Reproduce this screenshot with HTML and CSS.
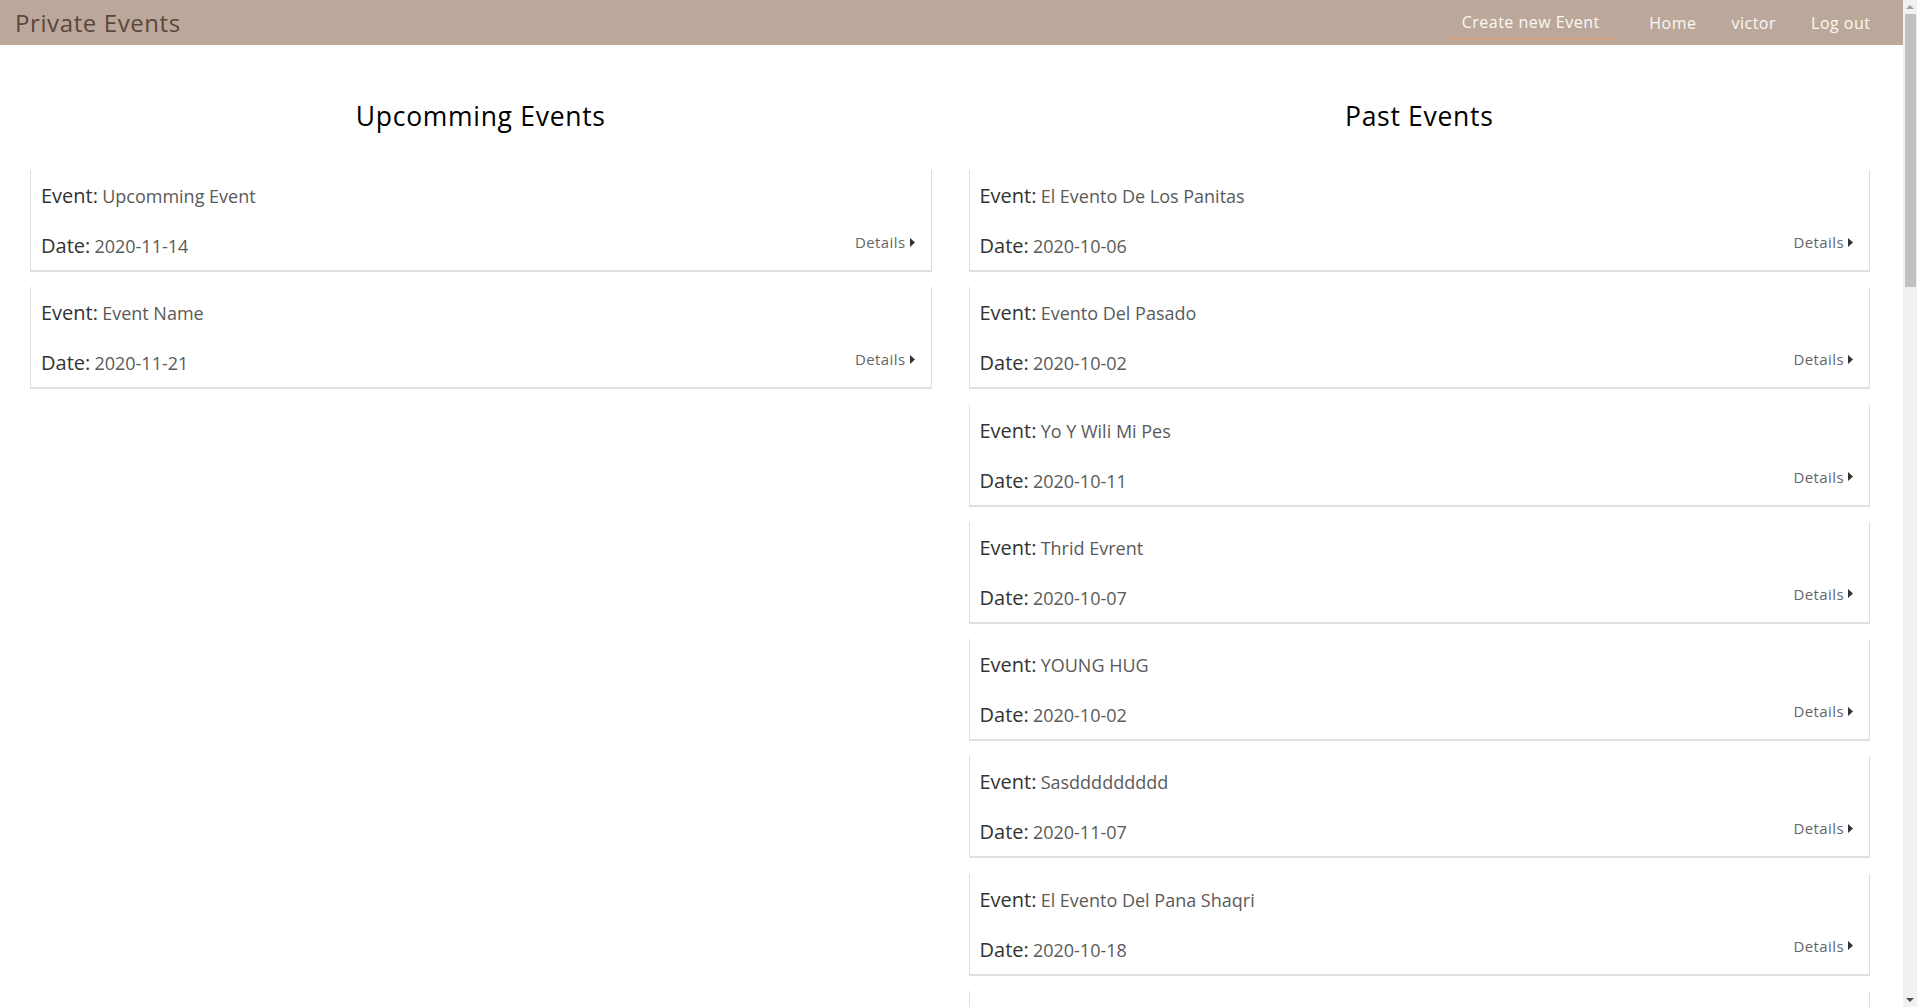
FILE: index.html
```html
<!DOCTYPE html>
<html lang="en">
<head>
<meta charset="utf-8">
<title>Private Events</title>
<link rel="stylesheet" href="styles.css">
</head>
<body>
<div class="page">
  <header class="topbar">
    <a class="brand" href="#">Private Events</a>
    <nav class="nav">
      <a class="nav-link active" href="#">Create new Event</a>
      <a class="nav-link" href="#">Home</a>
      <a class="nav-link" href="#">victor</a>
      <a class="nav-link" href="#">Log out</a>
    </nav>
  </header>
  <main class="columns">
    <section class="col">
      <h2 class="col-title">Upcomming Events</h2>
      <div class="card">
        <div class="line"><span class="label">Event:</span> <span class="value">Upcomming Event</span></div>
        <div class="line row"><span><span class="label">Date:</span> <span class="value">2020-11-14</span></span><a class="details" href="#">Details<svg class="caret" viewBox="0 0 5 9" width="5" height="9"><path d="M0 0L5 4.5L0 9Z"/></svg></a></div>
      </div>
      <div class="card">
        <div class="line"><span class="label">Event:</span> <span class="value">Event Name</span></div>
        <div class="line row"><span><span class="label">Date:</span> <span class="value">2020-11-21</span></span><a class="details" href="#">Details<svg class="caret" viewBox="0 0 5 9" width="5" height="9"><path d="M0 0L5 4.5L0 9Z"/></svg></a></div>
      </div>
    </section>
    <section class="col">
      <h2 class="col-title">Past Events</h2>
      <div class="card">
        <div class="line"><span class="label">Event:</span> <span class="value">El Evento De Los Panitas</span></div>
        <div class="line row"><span><span class="label">Date:</span> <span class="value">2020-10-06</span></span><a class="details" href="#">Details<svg class="caret" viewBox="0 0 5 9" width="5" height="9"><path d="M0 0L5 4.5L0 9Z"/></svg></a></div>
      </div>
      <div class="card">
        <div class="line"><span class="label">Event:</span> <span class="value">Evento Del Pasado</span></div>
        <div class="line row"><span><span class="label">Date:</span> <span class="value">2020-10-02</span></span><a class="details" href="#">Details<svg class="caret" viewBox="0 0 5 9" width="5" height="9"><path d="M0 0L5 4.5L0 9Z"/></svg></a></div>
      </div>
      <div class="card">
        <div class="line"><span class="label">Event:</span> <span class="value">Yo Y Wili Mi Pes</span></div>
        <div class="line row"><span><span class="label">Date:</span> <span class="value">2020-10-11</span></span><a class="details" href="#">Details<svg class="caret" viewBox="0 0 5 9" width="5" height="9"><path d="M0 0L5 4.5L0 9Z"/></svg></a></div>
      </div>
      <div class="card">
        <div class="line"><span class="label">Event:</span> <span class="value">Thrid Evrent</span></div>
        <div class="line row"><span><span class="label">Date:</span> <span class="value">2020-10-07</span></span><a class="details" href="#">Details<svg class="caret" viewBox="0 0 5 9" width="5" height="9"><path d="M0 0L5 4.5L0 9Z"/></svg></a></div>
      </div>
      <div class="card">
        <div class="line"><span class="label">Event:</span> <span class="value">YOUNG HUG</span></div>
        <div class="line row"><span><span class="label">Date:</span> <span class="value">2020-10-02</span></span><a class="details" href="#">Details<svg class="caret" viewBox="0 0 5 9" width="5" height="9"><path d="M0 0L5 4.5L0 9Z"/></svg></a></div>
      </div>
      <div class="card">
        <div class="line"><span class="label">Event:</span> <span class="value">Sasddddddddd</span></div>
        <div class="line row"><span><span class="label">Date:</span> <span class="value">2020-11-07</span></span><a class="details" href="#">Details<svg class="caret" viewBox="0 0 5 9" width="5" height="9"><path d="M0 0L5 4.5L0 9Z"/></svg></a></div>
      </div>
      <div class="card">
        <div class="line"><span class="label">Event:</span> <span class="value">El Evento Del Pana Shaqri</span></div>
        <div class="line row"><span><span class="label">Date:</span> <span class="value">2020-10-18</span></span><a class="details" href="#">Details<svg class="caret" viewBox="0 0 5 9" width="5" height="9"><path d="M0 0L5 4.5L0 9Z"/></svg></a></div>
      </div>
      <div class="card card-empty"></div>
    </section>
  </main>
</div>
<div class="scrollbar">
  <div class="sb-arrow sb-up"></div>
  <div class="sb-track"><div class="sb-thumb"></div></div>
  <div class="sb-arrow sb-down"></div>
</div>
</body>
</html>
```
FILE: styles.css
```css
html, body {
  margin: 0;
  padding: 0;
  background: #fff;
}
body {
  font-family: "Open Sans", "DejaVu Sans", sans-serif;
  color: #333;
  display: flex;
  height: 100vh;
  overflow: hidden;
}
a {
  text-decoration: none;
}
.page {
  flex: 1;
  min-width: 0;
  overflow: hidden;
}
.scrollbar {
  width: 14px;
  flex: none;
  height: 100vh;
  background: #f1f1f1;
  display: flex;
  flex-direction: column;
  align-items: center;
}
.sb-arrow {
  width: 0;
  height: 0;
  border-left: 4px solid transparent;
  border-right: 4px solid transparent;
}
.sb-up {
  border-bottom: 4px solid #a3a3a3;
  margin: 5px 0 5px;
}
.sb-down {
  border-top: 4px solid #505050;
  margin: 0 0 5px;
}
.sb-track {
  flex: 1;
  width: 100%;
  display: flex;
  justify-content: flex-end;
}
.sb-thumb {
  width: 11px;
  height: 273px;
  background: #c1c1c1;
  margin-right: 1px;
}
.topbar {
  height: 45px;
  background: #bca89a;
  display: flex;
  align-items: center;
  justify-content: space-between;
  padding: 0 15px;
}
.brand {
  font-size: 24px;
  letter-spacing: 0.6px;
  color: #5a473d;
  line-height: 45px;
}
.nav {
  display: flex;
  align-items: center;
  height: 45px;
}
.nav-link {
  color: #fbf8f6;
  font-size: 16px;
  letter-spacing: 0.5px;
  padding: 0 17.5px;
  line-height: 24px;
}
.nav-link.active {
  padding: 0 16px 4px;
  margin-right: 16px;
  border-bottom: 1px solid #e89c68;
  margin-top: 4px;
}
.columns {
  display: grid;
  grid-template-columns: 1fr 1fr;
  column-gap: 37px;
  padding: 0 33px 0 30px;
}
.col-title {
  text-align: center;
  font-weight: 400;
  font-size: 26.5px;
  letter-spacing: 0.7px;
  line-height: 31px;
  color: #000;
  margin: 56px 0 38px;
}
.card {
  border-left: 1px solid #dedede;
  border-right: 1px solid #dedede;
  border-bottom: 2px solid #e0e0e0;
  padding: 11px 16px 9px 10px;
  margin-bottom: 15.3px;
}
.card-empty {
  height: 80px;
}
.line {
  line-height: 30px;
  height: 30px;
}
.line.row {
  margin-top: 20px;
  display: flex;
  justify-content: space-between;
}
.label {
  font-size: 20px;
  color: #333;
}
.value {
  font-size: 18px;
  color: #5a5a5a;
}
.details {
  align-self: flex-start;
  margin-top: -1px;
  line-height: 24px;
  font-size: 15px;
  letter-spacing: 0.4px;
  color: #666;
  display: flex;
  align-items: center;
}
.caret {
  margin-left: 4px;
  fill: #333;
}
```
